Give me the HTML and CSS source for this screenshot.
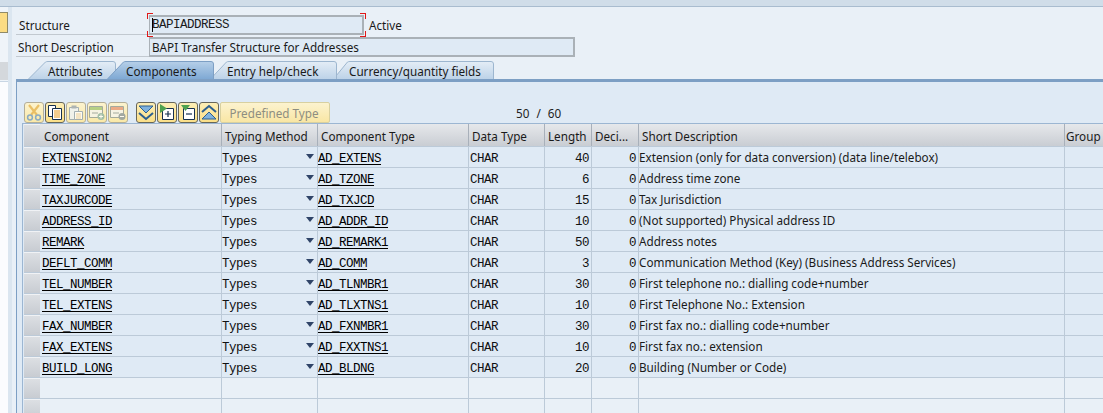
FILE: index.html
```html
<!DOCTYPE html>
<html lang="en">
<head>
    <meta charset="UTF-8">
    <title>Structure BAPIADDRESS</title>
    <link rel="stylesheet" href="styles.css">
</head>
<body>
    <div class="topbar"></div>
    <div class="screen">
        <div class="side">
            <div class="side-in">
                <div class="side-btn"></div>
                <div class="side-grey"></div>
                <div class="side-rest"></div>
            </div>
        </div>
        <div class="main">
            <div class="head-row first">
                <span class="head-label">Structure</span>
                <span class="field name-field"><i class="mark tl"></i><i class="mark tr"></i><i class="mark bl"></i><i class="mark br"></i><i class="caret"></i>BAPIADDRESS</span>
                <span class="status">Active</span>
            </div>
            <div class="head-row second">
                <span class="head-label">Short Description</span>
                <span class="field desc-field">BAPI Transfer Structure for Addresses</span>
            </div>

            <svg class="defs" width="0" height="0">
                <linearGradient id="tabOff" x1="0" y1="0" x2="0" y2="1"><stop offset="0" stop-color="#e4edf6"/><stop offset="1" stop-color="#bdd3e8"/></linearGradient>
                <linearGradient id="tabOn" x1="0" y1="0" x2="0" y2="1"><stop offset="0" stop-color="#b6cfe8"/><stop offset="1" stop-color="#7fa9d4"/></linearGradient>
            </svg>

            <div class="tabs">
                <div class="tab t1"><svg width="88" height="18"><path d="M.5 18L17.500 1Q18.500 .5 20 .5H85Q87.500 .5 87.500 3V18" fill="url(#tabOff)" stroke="#9db6cf"/></svg><span>Attributes</span></div>
                <div class="tab t2"><svg width="107" height="18"><path d="M.5 18L16.500 1Q17.500 .5 19 .5H104Q106.500 .5 106.500 3V18" fill="url(#tabOn)" stroke="#7d9fc4"/></svg><span>Components</span></div>
                <div class="tab t3"><svg width="127" height="18"><path d="M.5 18L16.500 1Q17.500 .5 19 .5H124Q126.500 .5 126.500 3V18" fill="url(#tabOff)" stroke="#9db6cf"/></svg><span>Entry help/check</span></div>
                <div class="tab t4"><svg width="161" height="18"><path d="M.5 18L14.500 1Q15.500 .5 17 .5H158Q160.500 .5 160.500 3V18" fill="url(#tabOff)" stroke="#9db6cf"/></svg><span>Currency/quantity fields</span></div>
            </div>

            <div class="panel">
                <div class="toolbar">
                    <button class="tool off"><svg width="16" height="17" viewBox="0 0 16 17"><path d="M3 1l8 10M13 1L5 11" stroke="#e6b44e" stroke-width="2.200"/><circle cx="4" cy="13.500" r="2.400" fill="none" stroke="#6f9cc6" stroke-width="1.500"/><circle cx="12" cy="13.500" r="2.400" fill="none" stroke="#6f9cc6" stroke-width="1.500"/></svg></button>
                    <button class="tool"><svg width="16" height="17" viewBox="0 0 16 17"><path d="M1.500 1.500h7v11h-7z" fill="#fff" stroke="#16304f"/><path d="M5.500 4.500h9v11h-9z" fill="#fff" stroke="#16304f"/><path d="M7 7h6M7 9h6M7 11h6M7 13h6" stroke="#e89c1c"/></svg></button>
                    <button class="tool off"><svg width="16" height="17" viewBox="0 0 16 17"><path d="M1.500 3.500h9v12h-9z" fill="#eef3f7" stroke="#8fa0b0"/><path d="M3.500 1.500h5v3h-5z" fill="#9aa5ad"/><path d="M6.500 7.500h8v8h-8z" fill="#fff" stroke="#8fa0b0"/><path d="M8 10h5M8 12h5M8 14h5" stroke="#e8c890"/></svg></button>
                    <button class="tool off"><svg width="16" height="17" viewBox="0 0 16 17"><path d="M.500 2.500h13v11H.500z" fill="#f5f5ee" stroke="#8f9a96"/><path d="M1 3h12v3H1z" fill="#a6c874"/><path d="M3 9h6" stroke="#8f9a96"/><circle cx="12" cy="12.500" r="3.500" fill="#8fb4a4"/><path d="M10 12.500h4M12 10.500v4" stroke="#fff"/></svg></button>
                    <button class="tool off"><svg width="16" height="17" viewBox="0 0 16 17"><path d="M.500 2.500h13v11H.500z" fill="#f5f5ee" stroke="#8f9a96"/><path d="M1 3h12v3H1z" fill="#e89a78"/><path d="M3 9h6" stroke="#8f9a96"/><circle cx="12" cy="12.500" r="3.500" fill="#8c989c"/><path d="M10 12.500h4" stroke="#fff"/></svg></button>
                    <button class="tool gap-left"><svg width="16" height="17" viewBox="0 0 16 17"><path d="M1 2h14L8 9z" fill="#7fb2de" stroke="#2c5f8f"/><path d="M1 9l7 6 7-6" fill="none" stroke="#2c5f8f" stroke-width="2"/></svg></button>
                    <button class="tool"><svg width="16" height="17" viewBox="0 0 16 17"><path d="M3.500 4.500h11v11h-11z" fill="#fff" stroke="#16304f"/><path d="M1 0l7 4.500L1 9z" fill="#4fa24f"/><path d="M6 10h6M9 7v6" stroke="#16304f" stroke-width="1.200"/></svg></button>
                    <button class="tool"><svg width="16" height="17" viewBox="0 0 16 17"><path d="M3.500 4.500h11v11h-11z" fill="#fff" stroke="#16304f"/><path d="M1 1h9L5.500 7z" fill="#4fa24f"/><path d="M6 10h6" stroke="#16304f" stroke-width="1.200"/></svg></button>
                    <button class="tool"><svg width="16" height="17" viewBox="0 0 16 17"><path d="M1 15h14L8 8z" fill="#7fb2de" stroke="#2c5f8f"/><path d="M1 8l7-6 7 6" fill="none" stroke="#2c5f8f" stroke-width="2"/></svg></button>
                    <button class="text-tool">Predefined Type</button>
                    <span class="counter">50&nbsp;&nbsp;/&nbsp;&nbsp;60</span>
                </div>

                <div class="grid">
                    <div class="row header">
                        <div class="sel"></div>
                        <div class="c c1">Component</div>
                        <div class="c c2">Typing Method</div>
                        <div class="c c3">Component Type</div>
                        <div class="c c4">Data Type</div>
                        <div class="c c5">Length</div>
                        <div class="c c6">Deci...</div>
                        <div class="c c7">Short Description</div>
                        <div class="c c8">Group</div>
                    </div>
                    <div id="rows"></div>
                </div>
            </div>
        </div>
    </div>
    <script src="rows.js"></script>
</body>
</html>
```

FILE: styles.css
```css
* {
    box-sizing: border-box;
}

html, body {
    margin: 0;
    padding: 0;
    height: 413px;
    overflow: hidden;
}

body {
    background-color: #e9f0f7;
    font-family: "Noto Sans", Arial, sans-serif;
    font-size: 11.7px;
    color: #1a1a1a;
}

.topbar {
    height: 7px;
    background-color: #d0dde9;
    border-bottom: 1px solid #a9bccf;
}

.screen {
    display: flex;
    height: 406px;
}

.side {
    width: 12px;
    flex-shrink: 0;
    background-color: #dbe6f0;
}

.side-in {
    width: 8px;
    height: 100%;
    padding-top: 5px;
    background-color: #eff4f9;
    display: flex;
    flex-direction: column;
}

.side-btn {
    height: 21px;
    background-color: #fbdc84;
    border: 1px solid #8f8a68;
    border-left: none;
}

.side-grey {
    height: 18px;
    margin-top: 29px;
    background-color: #d4d8dc;
}

.side-rest {
    flex: 1;
    background-color: #fbfcfe;
    border-top: 1px solid #c8d6e4;
    margin-top: 1px;
}

.main {
    flex: 1;
    padding-left: 4px;
    min-width: 0;
}

/* header fields */
.head-row {
    display: flex;
    height: 20px;
    line-height: 20px;
    white-space: nowrap;
}

.head-row.first {
    margin-top: 8px;
}

.head-row.second {
    margin-top: 2px;
}

.head-label {
    width: 133px;
    flex-shrink: 0;
    padding-left: 3px;
    border-bottom: 1px solid #c2c9d0;
}

.second .head-label {
    padding-left: 2px;
}

.field {
    display: block;
    flex-shrink: 0;
    height: 20px;
    line-height: 16px;
    padding-left: 2px;
    background-color: #dfeaf5;
    border: 2px solid #aab1b7;
    border-left-width: 1px;
    position: relative;
}

.name-field {
    width: 215px;
    font-family: "Liberation Mono", monospace;
    font-size: 12.5px;
    letter-spacing: -0.5px;
}

.desc-field {
    width: 426px;
}

.status {
    margin-left: 5px;
}

.caret {
    position: absolute;
    left: 2px;
    top: 1px;
    width: 1px;
    height: 14px;
    background-color: #000;
}

.mark {
    position: absolute;
    width: 6px;
    height: 6px;
    border: 0 solid #e01818;
}

.mark.tl { left: -3px; top: -4px; border-width: 1px 0 0 1px; }
.mark.tr { right: -4px; top: -4px; border-width: 1px 1px 0 0; }
.mark.bl { left: -3px; bottom: -4px; border-width: 0 0 1px 1px; }
.mark.br { right: -4px; bottom: -4px; border-width: 0 1px 1px 0; }

/* tabs */
.defs {
    position: absolute;
}

.tabs {
    display: flex;
    height: 18px;
    margin-top: 4px;
    padding-left: 12px;
}

.tab {
    position: relative;
    height: 18px;
    line-height: 20px;
    white-space: nowrap;
    flex-shrink: 0;
}

.tab svg {
    position: absolute;
    left: 0;
    top: 0;
}

.tab span {
    position: relative;
}

.t1 { width: 88px; padding-left: 20px; z-index: 3; }
.t2 { width: 107px; padding-left: 19px; margin-left: -9px; z-index: 4; }
.t3 { width: 127px; padding-left: 17px; margin-left: -4px; z-index: 2; }
.t4 { width: 161px; padding-left: 16px; margin-left: -4px; z-index: 1; }

/* panel */
.panel {
    height: 334px;
    border-top: 3px solid #7d9fc4;
    border-left: 1px solid #7d9fc4;
    background-color: #dfeaf5;
    padding: 20px 0 0 5px;
}

.toolbar {
    display: flex;
    gap: 1px;
    height: 21px;
    padding-left: 2px;
    position: relative;
    align-items: center;
}

.tool {
    width: 20px;
    height: 21px;
    padding: 0;
    margin: 0;
    border: 1px solid #66665a;
    border-radius: 3px;
    background-image: linear-gradient(#fdeeb6, #fbdf88);
    display: flex;
    align-items: center;
    justify-content: center;
}

.tool.off {
    border-color: #b3ae98;
    background-image: linear-gradient(#fcf3cf, #fae9a8);
}

.tool.off svg {
    opacity: 0.8;
}

.gap-left {
    margin-left: 7px;
}

.text-tool {
    width: 110px;
    height: 21px;
    border: 1px solid #d8d0a0;
    border-radius: 2px;
    background-image: linear-gradient(#fcf3cf, #f9e6a4);
    color: #8e8e80;
    font: inherit;
    padding: 0 2px 0 0;
}

.counter {
    position: absolute;
    left: 494px;
    color: #222;
    word-spacing: .5px;
}

/* table */
.grid {
    border-top: 1px solid #9cb6d2;
    border-left: 1px solid #9cb6d2;
    padding-left: 1px;
}

.row {
    display: flex;
    height: 21px;
    border-bottom: 1px solid #bccad8;
}

.sel {
    width: 16px;
    flex-shrink: 0;
    background-image: linear-gradient(#dcdfe3, #c8ccd2);
    border-top: 1px solid #f0f2f5;
}

.row.header {
    height: 23px;
}

.c {
    flex-shrink: 0;
    white-space: nowrap;
    overflow: hidden;
    border-right: 1px solid #bccad8;
    line-height: 24px;
    padding-left: 2px;
    position: relative;
}

.header .c {
    background-image: linear-gradient(#e6e8eb, #c9cdd3);
    line-height: 24px;
    padding-left: 3px;
    border-right-color: #a8b0ba;
}

.header .c1 { padding-left: 4px; }
.header .c8 { padding-left: 1px; }

.c1 { width: 182px; }
.c2 { width: 96px; }
.c3 { width: 151px; }
.c4 { width: 76px; }
.c5 { width: 47px; }
.c6 { width: 47px; }
.c7 { width: 426px; }
.c8 { flex: 1; border-right: none; }

.row.body .c {
    background-color: #dfeaf5;
    font-family: "Liberation Mono", monospace;
    font-size: 12.5px;
    letter-spacing: -0.5px;
    color: #111;
}

.row.body .c2,
.row.body .c3 {
    padding-left: 0;
}

.row.body .c4 {
    padding-left: 1px;
}

.row.body .c7 {
    font-family: "Noto Sans", Arial, sans-serif;
    font-size: 11.7px;
    letter-spacing: 0;
    line-height: 20px;
    color: #1a1a1a;
    padding-left: 0;
}

.row.empty .c {
    background-color: #e9f0f7;
}

.row.body .num {
    text-align: right;
    padding-right: 2px;
}

.link {
    color: #000;
    text-decoration: underline;
    text-underline-offset: 2px;
    text-decoration-thickness: 1px;
}

.arrow {
    position: absolute;
    right: 3px;
    top: 7px;
    width: 0;
    height: 0;
    border-left: 4px solid transparent;
    border-right: 4px solid transparent;
    border-top: 5px solid #2f4468;
}
```

FILE: rows.js
```js
// fill the component table
const data = [
    ['EXTENSION2', 'AD_EXTENS', 40, 'Extension (only for data conversion) (data line/telebox)'],
    ['TIME_ZONE', 'AD_TZONE', 6, 'Address time zone'],
    ['TAXJURCODE', 'AD_TXJCD', 15, 'Tax Jurisdiction'],
    ['ADDRESS_ID', 'AD_ADDR_ID', 10, '(Not supported) Physical address ID'],
    ['REMARK', 'AD_REMARK1', 50, 'Address notes'],
    ['DEFLT_COMM', 'AD_COMM', 3, 'Communication Method (Key) (Business Address Services)'],
    ['TEL_NUMBER', 'AD_TLNMBR1', 30, 'First telephone no.: dialling code+number'],
    ['TEL_EXTENS', 'AD_TLXTNS1', 10, 'First Telephone No.: Extension'],
    ['FAX_NUMBER', 'AD_FXNMBR1', 30, 'First fax no.: dialling code+number'],
    ['FAX_EXTENS', 'AD_FXXTNS1', 10, 'First fax no.: extension'],
    ['BUILD_LONG', 'AD_BLDNG', 20, 'Building (Number or Code)']
];

let html = '';
data.forEach(function (d) {
    html += `<div class="row body"><div class="sel"></div>
        <div class="c c1"><span class="link">${d[0]}</span></div>
        <div class="c c2">Types<i class="arrow"></i></div>
        <div class="c c3"><span class="link">${d[1]}</span></div>
        <div class="c c4">CHAR</div>
        <div class="c c5 num">${d[2]}</div>
        <div class="c c6 num">0</div>
        <div class="c c7">${d[3]}</div>
        <div class="c c8"></div></div>`;
});
for (let i = 0; i < 2; i++) {
    html += `<div class="row body empty"><div class="sel"></div>
        <div class="c c1"></div><div class="c c2"></div><div class="c c3"></div><div class="c c4"></div>
        <div class="c c5"></div><div class="c c6"></div><div class="c c7"></div><div class="c c8"></div></div>`;
}
document.getElementById('rows').innerHTML = html;
```
